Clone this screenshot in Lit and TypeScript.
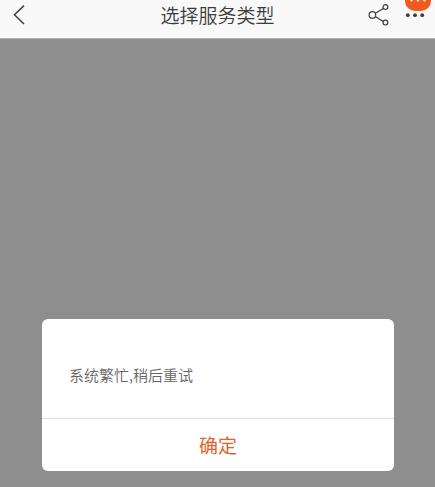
import { LitElement, html, css } from "lit";
import { customElement, property } from "lit/decorators.js";

@customElement("nav-header")
class NavHeader extends LitElement {
  @property() heading = "";

  static styles = css`
    :host {
      display: block;
    }
    .bar {
      display: grid;
      grid-template-columns: 72px 1fr 72px;
      align-items: center;
      height: 39px;
      padding-bottom: 8px;
      box-sizing: border-box;
      background: #f9f9f9;
      border-bottom: 1px solid #b4b4b4;
      position: relative;
    }
    h1 {
      margin: 0;
      font-size: 19px;
      line-height: 28px;
      font-weight: 350;
      text-align: center;
      color: #3c3c3c;
    }
    button {
      display: block;
      padding: 0;
      border: 0;
      background: none;
      color: #3e3e3e;
      cursor: pointer;
    }
    svg {
      display: block;
    }
    .back {
      margin-left: 8px;
    }
    .actions {
      display: flex;
      align-items: center;
      gap: 12px;
    }
    .more {
      position: relative;
    }
    .badge {
      position: absolute;
      left: 2px;
      top: -14px;
    }
  `;

  render() {
    return html`
      <header class="bar">
        <button class="back" aria-label="返回">
          <svg width="24" height="24" viewBox="0 0 24 24" fill="none" stroke="currentColor" stroke-width="1.5">
            <path d="M16 2.6 6.5 11.8 16 21" />
          </svg>
        </button>
        <h1>${this.heading}</h1>
        <div class="actions">
          <button aria-label="分享">
            <svg width="28" height="24" viewBox="0 0 28 24" fill="none" stroke="currentColor" stroke-width="1.2">
              <circle cx="9.4" cy="11.9" r="3.3" />
              <circle cx="22.4" cy="4.1" r="2.4" />
              <circle cx="22.4" cy="19.6" r="2.4" />
              <path d="M12.3 10.2 20.3 5.4M12.3 13.6 20.3 18.4" />
            </svg>
          </button>
          <button class="more" aria-label="更多">
            <svg width="26" height="24" viewBox="0 0 26 24" fill="currentColor">
              <circle cx="4.8" cy="12.2" r="1.9" />
              <circle cx="12" cy="12.2" r="1.9" />
              <circle cx="19.2" cy="12.2" r="1.9" />
            </svg>
            <svg class="badge" width="26" height="22" viewBox="0 0 26 22">
              <rect width="26" height="22" rx="10" fill="#f25a22" />
              <g fill="#ffe3d6">
                <circle cx="6.5" cy="11.2" r="1.2" />
                <circle cx="13" cy="11.2" r="1.2" />
                <circle cx="19.5" cy="11.2" r="1.2" />
              </g>
            </svg>
          </button>
        </div>
      </header>
    `;
  }
}

@customElement("alert-dialog")
class AlertDialog extends LitElement {
  @property() message = "";
  @property() action = "";

  static styles = css`
    :host {
      display: block;
    }
    .card {
      background: #fff;
      border-radius: 6px;
      overflow: hidden;
    }
    p {
      margin: 0;
      padding: 45px 27px 32px;
      font-size: 15px;
      line-height: 22px;
      font-weight: 350;
      color: #666;
    }
    button {
      display: block;
      width: 100%;
      height: 53px;
      padding: 0;
      border: 0;
      border-top: 1px solid #e0e0e0;
      background: none;
      font: inherit;
      font-size: 19px;
      line-height: 28px;
      color: #e0622c;
      cursor: pointer;
    }
  `;

  render() {
    return html`
      <div class="card" role="alertdialog" aria-describedby="message">
        <p id="message">${this.message}</p>
        <button>${this.action}</button>
      </div>
    `;
  }
}

@customElement("app-root")
class AppRoot extends LitElement {
  static styles = css`
    :host {
      display: flex;
      flex-direction: column;
      min-height: 100vh;
      background: #8e8e8e;
      font-family: "Noto Sans CJK SC", sans-serif;
    }
    main {
      flex: 1;
      display: flex;
      flex-direction: column;
      justify-content: flex-end;
      padding: 16px 41px 16px 42px;
    }
  `;

  render() {
    return html`
      <nav-header heading="选择服务类型"></nav-header>
      <main>
        <alert-dialog message="系统繁忙,稍后重试" action="确定"></alert-dialog>
      </main>
    `;
  }
}
